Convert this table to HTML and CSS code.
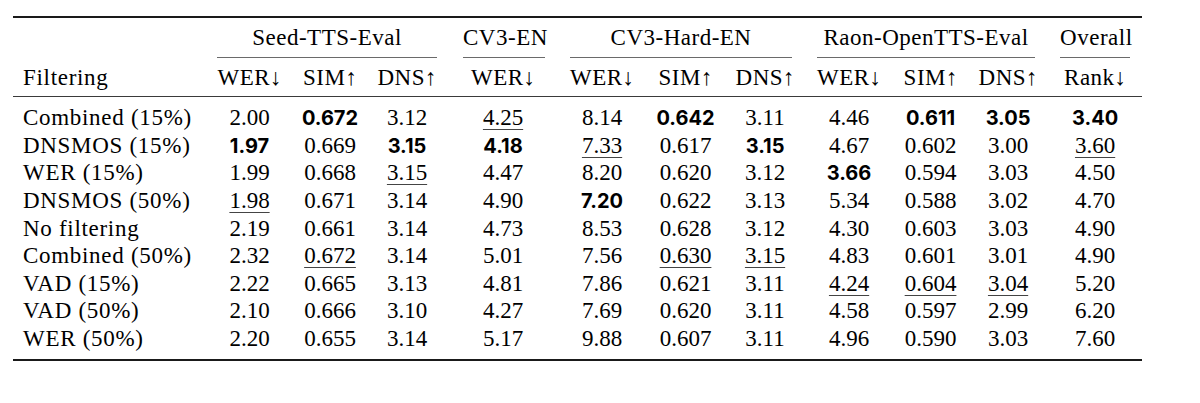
FILE: index.html
```html
<!DOCTYPE html>
<html lang="en">
<head>
<meta charset="utf-8">
<title>Filtering ablation</title>
<link rel="stylesheet" href="styles.css">
</head>
<body>
<div class="page">
  <table class="results">
    <colgroup>
      <col class="c-label">
      <col class="c-seed-wer"><col class="c-seed-sim"><col class="c-seed-dns">
      <col class="c-cv3-wer">
      <col class="c-hard-wer"><col class="c-hard-sim"><col class="c-hard-dns">
      <col class="c-raon-wer"><col class="c-raon-sim"><col class="c-raon-dns">
      <col class="c-rank">
    </colgroup>
    <thead>
      <tr class="group-row">
        <th class="label"></th>
        <th colspan="3"><div class="cmr cmr-seed">Seed-TTS-Eval</div></th>
        <th><div class="cmr cmr-cv3">CV3-EN</div></th>
        <th colspan="3"><div class="cmr cmr-hard">CV3-Hard-EN</div></th>
        <th colspan="3"><div class="cmr cmr-raon">Raon-OpenTTS-Eval</div></th>
        <th><div class="cmr cmr-overall">Overall</div></th>
      </tr>
      <tr class="metric-row">
        <th class="label">Filtering</th>
        <th>WER<span class="arr">↓</span></th>
        <th>SIM<span class="arr">↑</span></th>
        <th>DNS<span class="arr">↑</span></th>
        <th>WER<span class="arr">↓</span></th>
        <th>WER<span class="arr">↓</span></th>
        <th>SIM<span class="arr">↑</span></th>
        <th>DNS<span class="arr">↑</span></th>
        <th>WER<span class="arr">↓</span></th>
        <th>SIM<span class="arr">↑</span></th>
        <th>DNS<span class="arr">↑</span></th>
        <th>Rank<span class="arr">↓</span></th>
      </tr>
    </thead>
    <tbody>
      <tr class="first">
        <td class="label">Combined (15%)</td>
        <td>2.00</td><td><b>0.672</b></td><td>3.12</td>
        <td><u>4.25</u></td>
        <td>8.14</td><td><b>0.642</b></td><td>3.11</td>
        <td>4.46</td><td><b>0.611</b></td><td><b>3.05</b></td>
        <td><b>3.40</b></td>
      </tr>
      <tr>
        <td class="label">DNSMOS (15%)</td>
        <td><b>1.97</b></td><td>0.669</td><td><b>3.15</b></td>
        <td><b>4.18</b></td>
        <td><u>7.33</u></td><td>0.617</td><td><b>3.15</b></td>
        <td>4.67</td><td>0.602</td><td>3.00</td>
        <td><u>3.60</u></td>
      </tr>
      <tr>
        <td class="label">WER (15%)</td>
        <td>1.99</td><td>0.668</td><td><u>3.15</u></td>
        <td>4.47</td>
        <td>8.20</td><td>0.620</td><td>3.12</td>
        <td><b>3.66</b></td><td>0.594</td><td>3.03</td>
        <td>4.50</td>
      </tr>
      <tr>
        <td class="label">DNSMOS (50%)</td>
        <td><u>1.98</u></td><td>0.671</td><td>3.14</td>
        <td>4.90</td>
        <td><b>7.20</b></td><td>0.622</td><td>3.13</td>
        <td>5.34</td><td>0.588</td><td>3.02</td>
        <td>4.70</td>
      </tr>
      <tr>
        <td class="label">No filtering</td>
        <td>2.19</td><td>0.661</td><td>3.14</td>
        <td>4.73</td>
        <td>8.53</td><td>0.628</td><td>3.12</td>
        <td>4.30</td><td>0.603</td><td>3.03</td>
        <td>4.90</td>
      </tr>
      <tr>
        <td class="label">Combined (50%)</td>
        <td>2.32</td><td><u>0.672</u></td><td>3.14</td>
        <td>5.01</td>
        <td>7.56</td><td><u>0.630</u></td><td><u>3.15</u></td>
        <td>4.83</td><td>0.601</td><td>3.01</td>
        <td>4.90</td>
      </tr>
      <tr>
        <td class="label">VAD (15%)</td>
        <td>2.22</td><td>0.665</td><td>3.13</td>
        <td>4.81</td>
        <td>7.86</td><td>0.621</td><td>3.11</td>
        <td><u>4.24</u></td><td><u>0.604</u></td><td><u>3.04</u></td>
        <td>5.20</td>
      </tr>
      <tr>
        <td class="label">VAD (50%)</td>
        <td>2.10</td><td>0.666</td><td>3.10</td>
        <td>4.27</td>
        <td>7.69</td><td>0.620</td><td>3.11</td>
        <td>4.58</td><td>0.597</td><td>2.99</td>
        <td>6.20</td>
      </tr>
      <tr class="last">
        <td class="label">WER (50%)</td>
        <td>2.20</td><td>0.655</td><td>3.14</td>
        <td>5.17</td>
        <td>9.88</td><td>0.607</td><td>3.11</td>
        <td>4.96</td><td>0.590</td><td>3.03</td>
        <td>7.60</td>
      </tr>
    </tbody>
  </table>
</div>
</body>
</html>
```

FILE: styles.css
```css
html, body {
  margin: 0;
  padding: 0;
  background: #ffffff;
}

.page {
  padding: 16px 0 0 13px;
}

.results {
  border-collapse: separate;
  border-spacing: 0;
  table-layout: fixed;
  width: 1129px;
  font-family: "Liberation Serif", "DejaVu Serif", serif;
  font-size: 23px;
  line-height: 27.6px;
  color: #000;
}

.c-label { width: 192px; }
.c-seed-wer { width: 89px; }
.c-seed-sim { width: 72px; }
.c-seed-dns { width: 82px; }
.c-cv3-wer { width: 110px; }
.c-hard-wer { width: 88px; }
.c-hard-sim { width: 79px; }
.c-hard-dns { width: 80px; }
.c-raon-wer { width: 88px; }
.c-raon-sim { width: 75px; }
.c-raon-dns { width: 80px; }
.c-rank { width: 94px; }

.results th,
.results td {
  padding: 0;
  text-align: center;
  vertical-align: top;
  font-weight: normal;
  white-space: nowrap;
}

.results th {
  letter-spacing: 0.5px;
}

.results .label {
  text-align: left;
  padding-left: 10px;
  letter-spacing: 0.7px;
}

/* top rule */
.group-row th {
  border-top: 2px solid #1a1a1a;
  padding-top: 6px;
}

.cmr {
  padding-bottom: 5px;
  border-bottom: 1px solid #6a6a6a;
  margin: 0 12px;
}
.cmr-seed { margin: 0 11px 0 12px; }
.cmr-cv3 { margin: 0 13px 0 15px; }
.cmr-hard { margin: 0 13px 0 12px; }
.cmr-raon { margin: 0 13px 0 12px; }
.cmr-overall { margin: 0 12px; }

/* mid rule */
.metric-row th {
  padding-top: 6px;
  padding-bottom: 5px;
  border-bottom: 1px solid #3a3a3a;
}

.arr {
  letter-spacing: 0;
  line-height: 1;
}

.results tbody tr.first td {
  padding-top: 7px;
}

/* bottom rule */
.results tbody tr.last td {
  padding-bottom: 6px;
  border-bottom: 2px solid #1a1a1a;
}

.results b {
  font-family: "Inter", "Lato", "DejaVu Sans", sans-serif;
  font-weight: 700;
  font-size: 20px;
  line-height: 1;
  letter-spacing: 0;
}

.results u {
  text-decoration: underline;
  text-decoration-thickness: 1px;
  text-underline-offset: 4px;
  text-decoration-color: #444;
}
```
